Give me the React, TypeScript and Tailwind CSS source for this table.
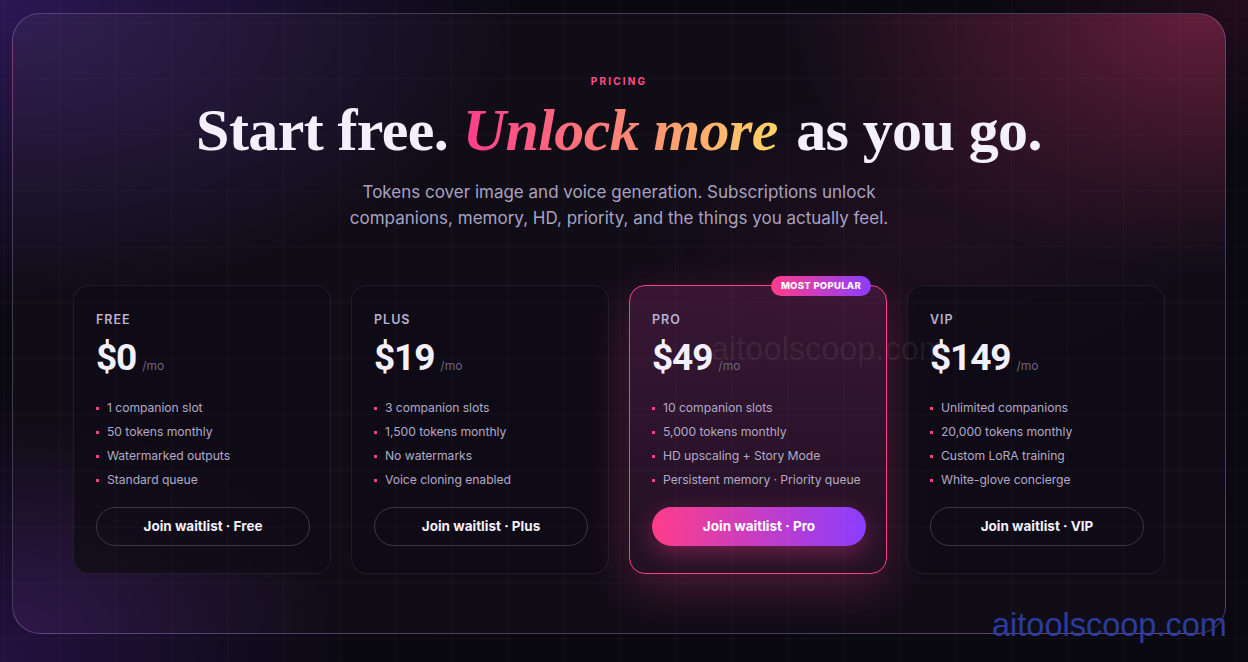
import React from "react";

type Plan = {
  name: string;
  price: string;
  features: string[];
  cta: string;
  popular?: boolean;
};

const plans: Plan[] = [
  {
    name: "FREE",
    price: "$0",
    features: ["1 companion slot", "50 tokens monthly", "Watermarked outputs", "Standard queue"],
    cta: "Join waitlist · Free",
  },
  {
    name: "PLUS",
    price: "$19",
    features: ["3 companion slots", "1,500 tokens monthly", "No watermarks", "Voice cloning enabled"],
    cta: "Join waitlist · Plus",
  },
  {
    name: "PRO",
    price: "$49",
    features: [
      "10 companion slots",
      "5,000 tokens monthly",
      "HD upscaling + Story Mode",
      "Persistent memory · Priority queue",
    ],
    cta: "Join waitlist · Pro",
    popular: true,
  },
  {
    name: "VIP",
    price: "$149",
    features: ["Unlimited companions", "20,000 tokens monthly", "Custom LoRA training", "White-glove concierge"],
    cta: "Join waitlist · VIP",
  },
];

function Card({ plan }: { plan: Plan }) {
  const base =
    "relative flex flex-col w-[258px] h-[289px] rounded-[16px] px-[22px] pt-[26px] pb-[27px]";
  const cls = plan.popular
    ? `${base} border border-[#ff3d8a] bg-[linear-gradient(180deg,rgba(70,25,60,0.75),rgba(35,18,38,0.85))] shadow-[0_14px_48px_rgba(255,61,138,0.26)]`
    : `${base} border border-[rgba(255,255,255,0.07)] bg-[rgba(16,12,22,0.78)]`;
  return (
    <div className={cls}>
      {plan.popular && (
        <div className="absolute -top-[10px] right-[15px] h-[20px] px-[10px] rounded-full bg-[linear-gradient(90deg,#ff3d8a,#8b3dff)] flex items-center text-[9.5px] font-extrabold tracking-[0.03em] text-white font-['Inter',sans-serif]">
          MOST POPULAR
        </div>
      )}
      <div className="text-[12.5px] leading-[16px] font-semibold tracking-[0.08em] text-[#b9b1d2]">{plan.name}</div>
      <div className="mt-[10px] flex items-baseline gap-[6px] h-[40px]">
        <span className="font-['Roboto',sans-serif] font-bold text-[37px] leading-[40px] tracking-[-0.03em] text-[#f4f0fb]">
          {plan.price}
        </span>
        <span className="text-[12px] text-[#6c6380]">/mo</span>
      </div>
      <ul className="mt-[21px] flex flex-col gap-[6px]">
        {plan.features.map((f) => (
          <li key={f} className="flex items-center h-[18px] whitespace-nowrap text-[12.2px] tracking-[-0.005em] text-[#b1a9c6]">
            <span className="w-[3px] h-[3px] bg-[#ff3d8a] mr-[8px] shrink-0" />
            {f}
          </li>
        ))}
      </ul>
      <div className="mt-auto">
        {plan.popular ? (
          <div className="h-[39px] w-[214px] rounded-full bg-[linear-gradient(90deg,#ff3d8a,#8b3dff)] shadow-[0_8px_26px_rgba(255,61,138,0.35)] flex items-center justify-center text-[13.5px] font-bold text-white">
            {plan.cta}
          </div>
        ) : (
          <div className="h-[39px] w-[214px] rounded-full border border-[rgba(255,255,255,0.18)] flex items-center justify-center text-[13.5px] font-bold text-[#f4f0fb]">
            {plan.cta}
          </div>
        )}
      </div>
    </div>
  );
}

export default function App() {
  return (
    <div className="relative w-[1248px] h-[662px] overflow-hidden bg-[#0a0910] font-['Inter',sans-serif] bg-[radial-gradient(ellipse_60%_70%_at_0%_0%,rgba(70,35,140,0.55),transparent_70%),radial-gradient(ellipse_40%_60%_at_0%_100%,rgba(60,25,110,0.5),transparent_70%),radial-gradient(ellipse_30%_30%_at_100%_0%,rgba(60,15,40,0.5),transparent_70%)]">
      <div className="pt-[13px] pl-[12px]">
        <div className="relative w-[1214px] h-[621px] rounded-[28px] border border-[rgba(200,180,255,0.28)] overflow-hidden bg-[#110d17] bg-[radial-gradient(ellipse_45%_55%_at_98%_0%,rgba(125,35,70,0.75),transparent_75%),radial-gradient(ellipse_55%_60%_at_0%_0%,rgba(55,35,95,0.85),transparent_75%),radial-gradient(ellipse_35%_45%_at_0%_100%,rgba(60,28,95,0.7),transparent_75%),radial-gradient(ellipse_30%_30%_at_75%_35%,rgba(60,20,50,0.35),transparent_75%)]">
          <div className="flex flex-col items-center pt-[61px]">
            <div className="text-[10px] leading-[12px] font-bold tracking-[0.22em] text-[#ff4d8d]">PRICING</div>
            <h1 className="mt-[10px] font-['Liberation_Serif',serif] font-bold text-[60px] leading-[66px] text-[#f3effb] tracking-[-0.01em]">
              Start free.{" "}
              <span className="italic font-bold pr-[4px] bg-[linear-gradient(90deg,#ff3d8a,#ff8c74_55%,#ffd766)] bg-clip-text text-transparent">
                Unlock more
              </span>{" "}
              as you go.
            </h1>
            <p className="mt-[16px] w-[600px] text-center text-[17px] leading-[26px] text-[#a9a1c1]">
              Tokens cover image and voice generation. Subscriptions unlock companions, memory, HD, priority, and the
              things you actually feel.
            </p>
          </div>
          <div className="mt-[54px] flex justify-center gap-[20px]">
            {plans.map((p) => (
              <Card key={p.name} plan={p} />
            ))}
          </div>
        </div>
      </div>
      {/* grid overlay */}
      <div className="pointer-events-none absolute inset-0 bg-[linear-gradient(rgba(255,255,255,0.025)_1px,transparent_1px),linear-gradient(90deg,rgba(255,255,255,0.025)_1px,transparent_1px)] bg-[size:56px_56px] bg-[position:3px_22px]" />
      {/* watermarks */}
      <div className="pointer-events-none absolute left-[711px] top-[332px] font-['Liberation_Sans',sans-serif] text-[32.5px] leading-[34px] text-[rgba(255,255,255,0.07)]">
        aitoolscoop.com
      </div>
      <div className="pointer-events-none absolute left-[992px] top-[608px] font-['Liberation_Sans',sans-serif] text-[32.5px] leading-[34px] text-[#2a3c9c]">
        aitoolscoop.com
      </div>
    </div>
  );
}
